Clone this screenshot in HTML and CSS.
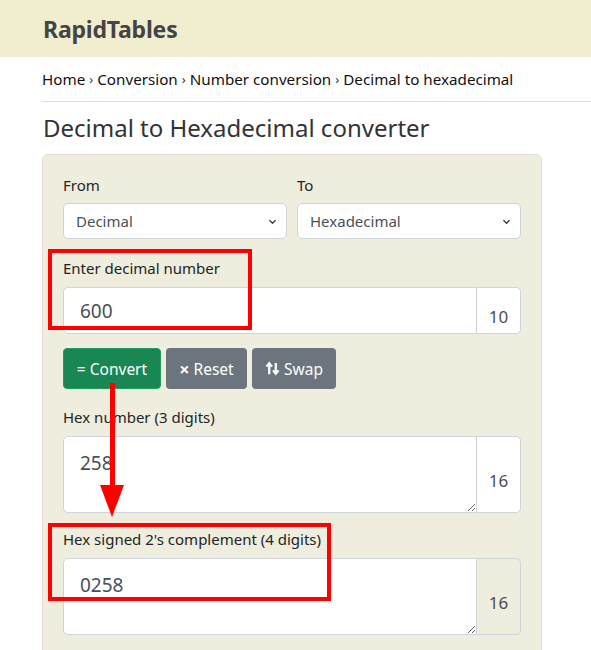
FILE: index.html
```html
<!DOCTYPE html>
<html lang="en">
  <head>
    <meta charset="UTF-8" />
    <meta name="viewport" content="width=device-width, initial-scale=1.0" />
    <title>Decimal to Hexadecimal converter</title>
    <link rel="stylesheet" href="styles.css">
  </head>
  <body>
    <header class="topbar">
      <div class="logo">RapidTables</div>
    </header>

    <div class="page">
      <nav class="crumbs">
        <a>Home</a> <span class="sep">›</span> <a>Conversion</a>
        <span class="sep">›</span> <a>Number conversion</a>
        <span class="sep">›</span> <a>Decimal to hexadecimal</a>
      </nav>

      <h1>Decimal to Hexadecimal converter</h1>

      <form class="card">
        <div class="row">
          <div class="field">
            <label>From</label>
            <div class="select">
              <span>Decimal</span>
              <svg class="chev" viewBox="0 0 16 16"><path d="M3.5 6l4.5 4.5L12.5 6" /></svg>
            </div>
          </div>
          <div class="field">
            <label>To</label>
            <div class="select">
              <span>Hexadecimal</span>
              <svg class="chev" viewBox="0 0 16 16"><path d="M3.5 6l4.5 4.5L12.5 6" /></svg>
            </div>
          </div>
        </div>

        <div class="field">
          <label>Enter decimal number</label>
          <div class="group">
            <input class="box" type="text" value="600" />
            <span class="addon">10</span>
          </div>
        </div>

        <div class="buttons">
          <button type="button" class="btn btn-green">= Convert</button>
          <button type="button" class="btn btn-gray"><b class="x">×</b> Reset</button>
          <button type="button" class="btn btn-gray">
            <svg class="swap" viewBox="0 0 16 16">
              <path d="M4.5 14V3M1.5 6l3-3.5 3 3.5M11.5 2v11M8.5 10l3 3.5 3-3.5" />
            </svg>
            Swap
          </button>
        </div>

        <div class="field">
          <label>Hex number (3 digits)</label>
          <div class="group">
            <textarea class="box area">258</textarea>
            <span class="addon">16</span>
          </div>
        </div>

        <div class="field">
          <label>Hex signed 2's complement (4 digits)</label>
          <div class="group">
            <textarea class="box area">0258</textarea>
            <span class="addon plain">16</span>
          </div>
        </div>
      </form>

      <!-- annotations drawn over the screenshot -->
      <div class="mark mark-input"></div>
      <div class="mark mark-signed"></div>
      <div class="arrow">
        <div class="arrow-line"></div>
        <div class="arrow-head"></div>
      </div>
    </div>
  </body>
</html>
```

FILE: styles.css
```css
* {
  box-sizing: border-box;
  margin: 0;
  padding: 0;
}

body {
  font-family: "Noto Sans", "Open Sans", sans-serif;
  color: #212529;
  background: #fff;
  overflow: hidden;
}

/* Header */
.topbar {
  height: 57px;
  background-color: #f0eecf;
  padding-left: 43px;
  display: flex;
  align-items: center;
}

.logo {
  font-size: 23px;
  font-weight: 700;
  color: #444;
  letter-spacing: -0.2px;
}

/* Page */
.page {
  position: relative;
  padding-left: 42px;
}

.crumbs {
  font-size: 15.2px;
  color: #111;
  height: 45px;
  display: flex;
  align-items: center;
  gap: 4px;
  border-bottom: 1px solid #dcdcdc;
}

.crumbs .sep {
  font-size: 13px;
  color: #333;
}

h1 {
  font-size: 24px;
  font-weight: 400;
  color: #333;
  margin: 10px 0 0 1px;
  line-height: 32px;
}

/* Card */
.card {
  width: 500px;
  margin-top: 10px;
  background-color: #efeddd;
  border: 1px solid #e0ded2;
  border-radius: 6px;
  padding: 18px 20px 30px 20px;
  height: 520px;
}

.row {
  display: flex;
  gap: 10px;
}

.row .field {
  flex: 1;
  margin-bottom: 17px;
}

.row label {
  margin-bottom: 6px;
}

.field {
  margin-bottom: 14px;
}

label {
  display: block;
  font-size: 15px;
  line-height: 24px;
  margin-bottom: 7px;
}

.select {
  position: relative;
  height: 36px;
  background: #fff;
  border: 1px solid #ced4da;
  border-radius: 5px;
  display: flex;
  align-items: center;
  padding-left: 12px;
  font-size: 15px;
  color: #495057;
}

.chev {
  position: absolute;
  right: 8px;
  top: 12px;
  width: 11px;
  height: 11px;
  fill: none;
  stroke: #343a40;
  stroke-width: 2;
}

/* Input groups */
.group {
  display: flex;
}

.box {
  flex: 1;
  font-family: inherit;
  font-size: 19px;
  color: #495057;
  background: #fff;
  border: 1px solid #ced4da;
  border-radius: 5px 0 0 5px;
  padding: 0 16px;
  height: 47px;
  outline: none;
}

.area {
  height: 77px;
  padding-top: 13px;
  line-height: 26px;
  resize: vertical;
}

.addon {
  width: 44px;
  background: #fff;
  border: 1px solid #ced4da;
  border-left: none;
  border-radius: 0 5px 5px 0;
  display: flex;
  align-items: center;
  justify-content: center;
  padding-top: 11px;
  font-size: 17px;
  color: #495057;
}

.addon.plain {
  background: transparent;
}

/* Buttons */
.buttons {
  display: flex;
  gap: 5px;
  margin: 5px 0 16px;
}

.btn {
  height: 41px;
  border: 1px solid transparent;
  border-radius: 4px;
  color: #fff;
  font-family: inherit;
  font-size: 15.5px;
  padding: 0 12px;
  display: flex;
  align-items: center;
  gap: 4px;
}

.btn-green {
  background-color: #198754;
  border-color: #1f9c5f;
  width: 98px;
  justify-content: center;
}

.btn-gray {
  background-color: #6c757d;
}

.btn-gray:nth-child(2) {
  width: 81px;
  justify-content: center;
}

.btn-gray:nth-child(3) {
  width: 84px;
  justify-content: center;
}

.x {
  font-size: 18px;
  line-height: 1;
}

.swap {
  width: 15px;
  height: 15px;
  fill: none;
  stroke: #fff;
  stroke-width: 2.4;
}

/* Red annotations */
.mark {
  position: absolute;
  border: 4px solid #f00;
}

.mark-input {
  left: 48px;
  top: 192px;
  width: 204px;
  height: 81px;
}

.mark-signed {
  left: 48px;
  top: 466px;
  width: 283px;
  height: 78px;
}

.arrow {
  position: absolute;
  left: 100px;
  top: 326px;
  width: 24px;
}

.arrow-line {
  width: 5px;
  height: 105px;
  margin-left: 9.5px;
  background: #f00;
}

.arrow-head {
  width: 0;
  height: 0;
  border-left: 12px solid transparent;
  border-right: 12px solid transparent;
  border-top: 32px solid #f00;
  margin-top: -3px;
}
```
